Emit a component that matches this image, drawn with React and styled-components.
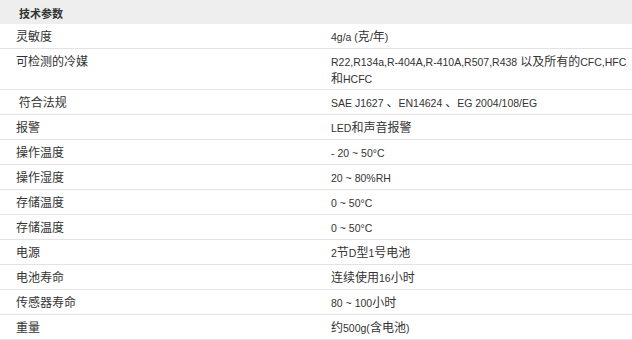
import React from "react";
import styled, { createGlobalStyle } from "styled-components";

const GlobalStyle = createGlobalStyle`
  body {
    margin: 0;
    background: #fff;
    font-family: "Liberation Sans", "Noto Sans CJK SC", sans-serif;
    color: #333;
  }
`;

const specs = [
  ["灵敏度", "4g/a (克/年)"],
  ["可检测的冷媒", "R22,R134a,R-404A,R-410A,R507,R438 以及所有的CFC,HFC和HCFC", 2],
  [" 符合法规", "SAE J1627 、EN14624 、EG 2004/108/EG"],
  ["报警", "LED和声音报警"],
  ["操作温度", "- 20 ~ 50°C"],
  ["操作湿度", "20 ~ 80%RH"],
  ["存储温度", "0 ~ 50°C"],
  ["存储温度", "0 ~ 50°C"],
  ["电源", "2节D型1号电池"],
  ["电池寿命", "连续使用16小时"],
  ["传感器寿命", "80 ~ 100小时"],
  ["重量", "约500g(含电池)"],
];

// split text into runs so Latin glyphs can be drawn smaller than CJK ones
function Mixed({ text }) {
  const parts = text.split(/([\u3000-\u9fff\uff00-\uffef]+)/);
  return parts.map((p, i) =>
    /[\u3000-\u9fff\uff00-\uffef]/.test(p) ? (
      <Cjk key={i}>{p}</Cjk>
    ) : (
      <Latin key={i}>{p}</Latin>
    )
  );
}

export default function App() {
  return (
    <Table>
      <GlobalStyle />
      <Header>技术参数</Header>
      {specs.map(([label, value, lines = 1], i) => (
        <Row key={i} $lines={lines}>
          <Label>{label}</Label>
          <Value>
            <Mixed text={value} />
          </Value>
        </Row>
      ))}
    </Table>
  );
}

const Table = styled.div`
  width: 632px;
  display: flex;
  flex-direction: column;
`;

const Header = styled.div`
  height: 24px;
  line-height: 26px;
  background: #eeeeee;
  padding-left: 19px;
  font-size: 11px;
  font-weight: bold;
  color: #333;
  font-family: "Noto Sans CJK SC", sans-serif;
`;

const Row = styled.div`
  display: grid;
  grid-template-columns: 316px 316px;
  box-sizing: border-box;
  height: ${(p) => (p.$lines > 1 ? 41 : 25)}px;
  border-bottom: 1px solid #e3e3e3;
  padding-top: 4px;
  line-height: 16px;
  overflow: hidden;
`;

const Label = styled.div`
  padding-left: 16px;
  font-size: 12px;
  white-space: pre;
  font-family: "Noto Sans CJK SC", sans-serif;
`;

const Value = styled.div`
  padding-left: 15px;
`;

const Cjk = styled.span`
  font-size: 12px;
  line-height: 16px;
  font-family: "Noto Sans CJK SC", sans-serif;
`;

const Latin = styled.span`
  font-size: 10.5px;
  line-height: 16px;
  font-family: "Liberation Sans", sans-serif;
`;
